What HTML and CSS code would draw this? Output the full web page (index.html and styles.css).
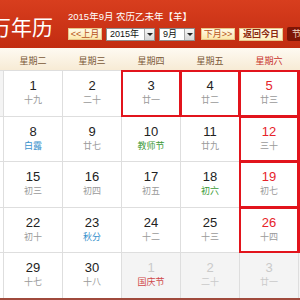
FILE: index.html
```html
<!DOCTYPE html>
<html lang="zh">
<head>
<meta charset="utf-8">
<title>万年历</title>
<link rel="stylesheet" href="styles.css">
</head>
<body>
<div class="cal">
  <div class="top">
    <div class="title">万年历</div>
    <div class="info">
      <div class="date-line">2015年9月 农历乙未年【羊】</div>
      <div class="controls">
        <span class="btn">&lt;&lt;上月</span>
        <span class="sel sel-year"><span class="sel-text">2015年</span><span class="sel-arrow"><i></i></span></span>
        <span class="sel sel-month"><span class="sel-text">9月</span><span class="sel-arrow"><i></i></span></span>
        <span class="btn btn-next">下月&gt;&gt;</span>
        <span class="btn btn-today">返回今日</span>
        <span class="btn-dark">节假日</span>
      </div>
    </div>
  </div>
  <div class="week">
    <span>星期一</span><span>星期二</span><span>星期三</span><span>星期四</span><span>星期五</span><span class="we">星期六</span><span class="we">星期日</span>
  </div>
  <div class="grid">
    <div class="cell other"><div class="num">31</div><div class="lunar">十八</div></div>
    <div class="cell"><div class="num">1</div><div class="lunar">十九</div></div>
    <div class="cell"><div class="num">2</div><div class="lunar">二十</div></div>
    <div class="cell sel-box"><div class="num">3</div><div class="lunar">廿一</div></div>
    <div class="cell sel-box"><div class="num">4</div><div class="lunar">廿二</div></div>
    <div class="cell sel-box wkend"><div class="num">5</div><div class="lunar">廿三</div></div>
    <div class="cell sel-box wkend"><div class="num">6</div><div class="lunar">廿四</div></div>

    <div class="cell"><div class="num">7</div><div class="lunar">廿五</div></div>
    <div class="cell"><div class="num">8</div><div class="lunar term">白露</div></div>
    <div class="cell"><div class="num">9</div><div class="lunar">廿七</div></div>
    <div class="cell"><div class="num">10</div><div class="lunar fest">教师节</div></div>
    <div class="cell"><div class="num">11</div><div class="lunar">廿九</div></div>
    <div class="cell sel-box wkend"><div class="num">12</div><div class="lunar">三十</div></div>
    <div class="cell sel-box wkend"><div class="num">13</div><div class="lunar">八月</div></div>

    <div class="cell"><div class="num">14</div><div class="lunar">初二</div></div>
    <div class="cell"><div class="num">15</div><div class="lunar">初三</div></div>
    <div class="cell"><div class="num">16</div><div class="lunar">初四</div></div>
    <div class="cell"><div class="num">17</div><div class="lunar">初五</div></div>
    <div class="cell"><div class="num">18</div><div class="lunar fest">初六</div></div>
    <div class="cell sel-box wkend"><div class="num">19</div><div class="lunar">初七</div></div>
    <div class="cell sel-box wkend"><div class="num">20</div><div class="lunar">初八</div></div>

    <div class="cell"><div class="num">21</div><div class="lunar">初九</div></div>
    <div class="cell"><div class="num">22</div><div class="lunar">初十</div></div>
    <div class="cell"><div class="num">23</div><div class="lunar term">秋分</div></div>
    <div class="cell"><div class="num">24</div><div class="lunar">十二</div></div>
    <div class="cell"><div class="num">25</div><div class="lunar">十三</div></div>
    <div class="cell sel-box wkend"><div class="num">26</div><div class="lunar">十四</div></div>
    <div class="cell sel-box wkend"><div class="num">27</div><div class="lunar holiday">中秋节</div></div>

    <div class="cell"><div class="num">28</div><div class="lunar">十六</div></div>
    <div class="cell"><div class="num">29</div><div class="lunar">十七</div></div>
    <div class="cell"><div class="num">30</div><div class="lunar">十八</div></div>
    <div class="cell other"><div class="num">1</div><div class="lunar holiday">国庆节</div></div>
    <div class="cell other"><div class="num">2</div><div class="lunar">二十</div></div>
    <div class="cell other"><div class="num">3</div><div class="lunar">廿一</div></div>
    <div class="cell other"><div class="num">4</div><div class="lunar">廿二</div></div>
  </div>
</div>
</body>
</html>
```
FILE: styles.css
```css
html, body {
  margin: 0;
  padding: 0;
  overflow: hidden;
  background: #fff;
}

.cal {
  width: 414px;
  margin-left: -56px;
  font-family: "Liberation Sans", "Noto Sans CJK SC", sans-serif;
}

.top {
  height: 48px;
  display: flex;
  background: linear-gradient(#d83e1e, #c22c11);
}

.title {
  flex: none;
  width: 124px;
  box-sizing: border-box;
  padding-right: 15px;
  padding-top: 4px;
  display: flex;
  align-items: center;
  justify-content: flex-end;
  font-family: "Noto Sans CJK SC", sans-serif;
  font-size: 21px;
  color: #fff;
}

.info {
  display: flex;
  flex-direction: column;
  padding-top: 11px;
}

.date-line {
  height: 12px;
  line-height: 12px;
  font-size: 9.5px;
  color: #fff;
  white-space: nowrap;
}

.controls {
  margin-top: 4px;
  display: flex;
  align-items: center;
  gap: 4px;
  white-space: nowrap;
}

.btn {
  box-sizing: border-box;
  width: 34px;
  height: 12px;
  line-height: 10px;
  font-size: 9px;
  text-align: center;
  border: 1px solid #e7c78a;
  background: linear-gradient(#fffbe8, #fbe7ab);
  color: #b7531c;
}

.btn-next {
  margin-left: 2px;
}

.btn-today {
  width: 44px;
  height: 13px;
  line-height: 11px;
  background: linear-gradient(#fffbe8, #fdefc0);
  color: #8c2a10;
  font-weight: bold;
}

.btn-dark {
  box-sizing: border-box;
  height: 14px;
  line-height: 14px;
  padding: 0 5px;
  font-size: 9px;
  border-radius: 2px;
  background: #7e1506;
  color: #f4d8c8;
}

.sel {
  box-sizing: border-box;
  display: flex;
  height: 13px;
  border: 1px solid #8c8c8c;
  background: #fff;
  font-size: 9px;
}

.sel-year {
  width: 49px;
}

.sel-month {
  width: 36px;
}

.sel-text {
  flex: 1;
  padding-left: 3px;
  line-height: 11px;
  color: #111;
}

.sel-arrow {
  width: 9px;
  border-left: 1px solid #aaa;
  background: linear-gradient(#f6f6f6, #d6d6d6);
  display: flex;
  align-items: center;
  justify-content: center;
}

.sel-arrow i {
  width: 0;
  height: 0;
  border-left: 3px solid transparent;
  border-right: 3px solid transparent;
  border-top: 3px solid #222;
}

.week {
  height: 22px;
  box-sizing: border-box;
  padding: 3px 1px 0;
  display: flex;
  gap: 1px;
  background: linear-gradient(#fefaf2, #f7ebd5);
}

.week span {
  width: 58px;
  text-align: center;
  line-height: 19px;
  font-size: 9px;
  color: #7a5838;
  font-family: "Noto Sans CJK SC", sans-serif;
}

.week .we {
  color: #c8302a;
}

.grid {
  display: grid;
  grid-template-columns: repeat(7, 58px);
  grid-template-rows: 45px 44px 45px 44px 45px;
  gap: 1px;
  padding: 1px 1px 0;
  background: #dedede;
  border-bottom: 2px solid #a04a3c;
}

.cell {
  background: #fff;
  text-align: center;
  padding-top: 7px;
  box-sizing: border-box;
}

.num {
  font-size: 13px;
  line-height: 15px;
  color: #222;
}

.lunar {
  font-size: 9px;
  line-height: 13px;
  color: #9a9a9a;
  font-family: "Noto Sans CJK SC", sans-serif;
}

.lunar.term {
  color: #3a92cc;
}

.lunar.fest {
  color: #3c9a36;
}

.lunar.holiday {
  color: #d43a3a;
}

.wkend .num {
  color: #e6232a;
}

.sel-box {
  outline: 2px solid #e2141c;
  outline-offset: -1px;
}

.cell.other {
  background: #f4f4f4;
}

.cell.other .num,
.cell.other .lunar {
  color: #cacaca;
}

.cell.other .lunar.holiday {
  color: #d04848;
}
```
